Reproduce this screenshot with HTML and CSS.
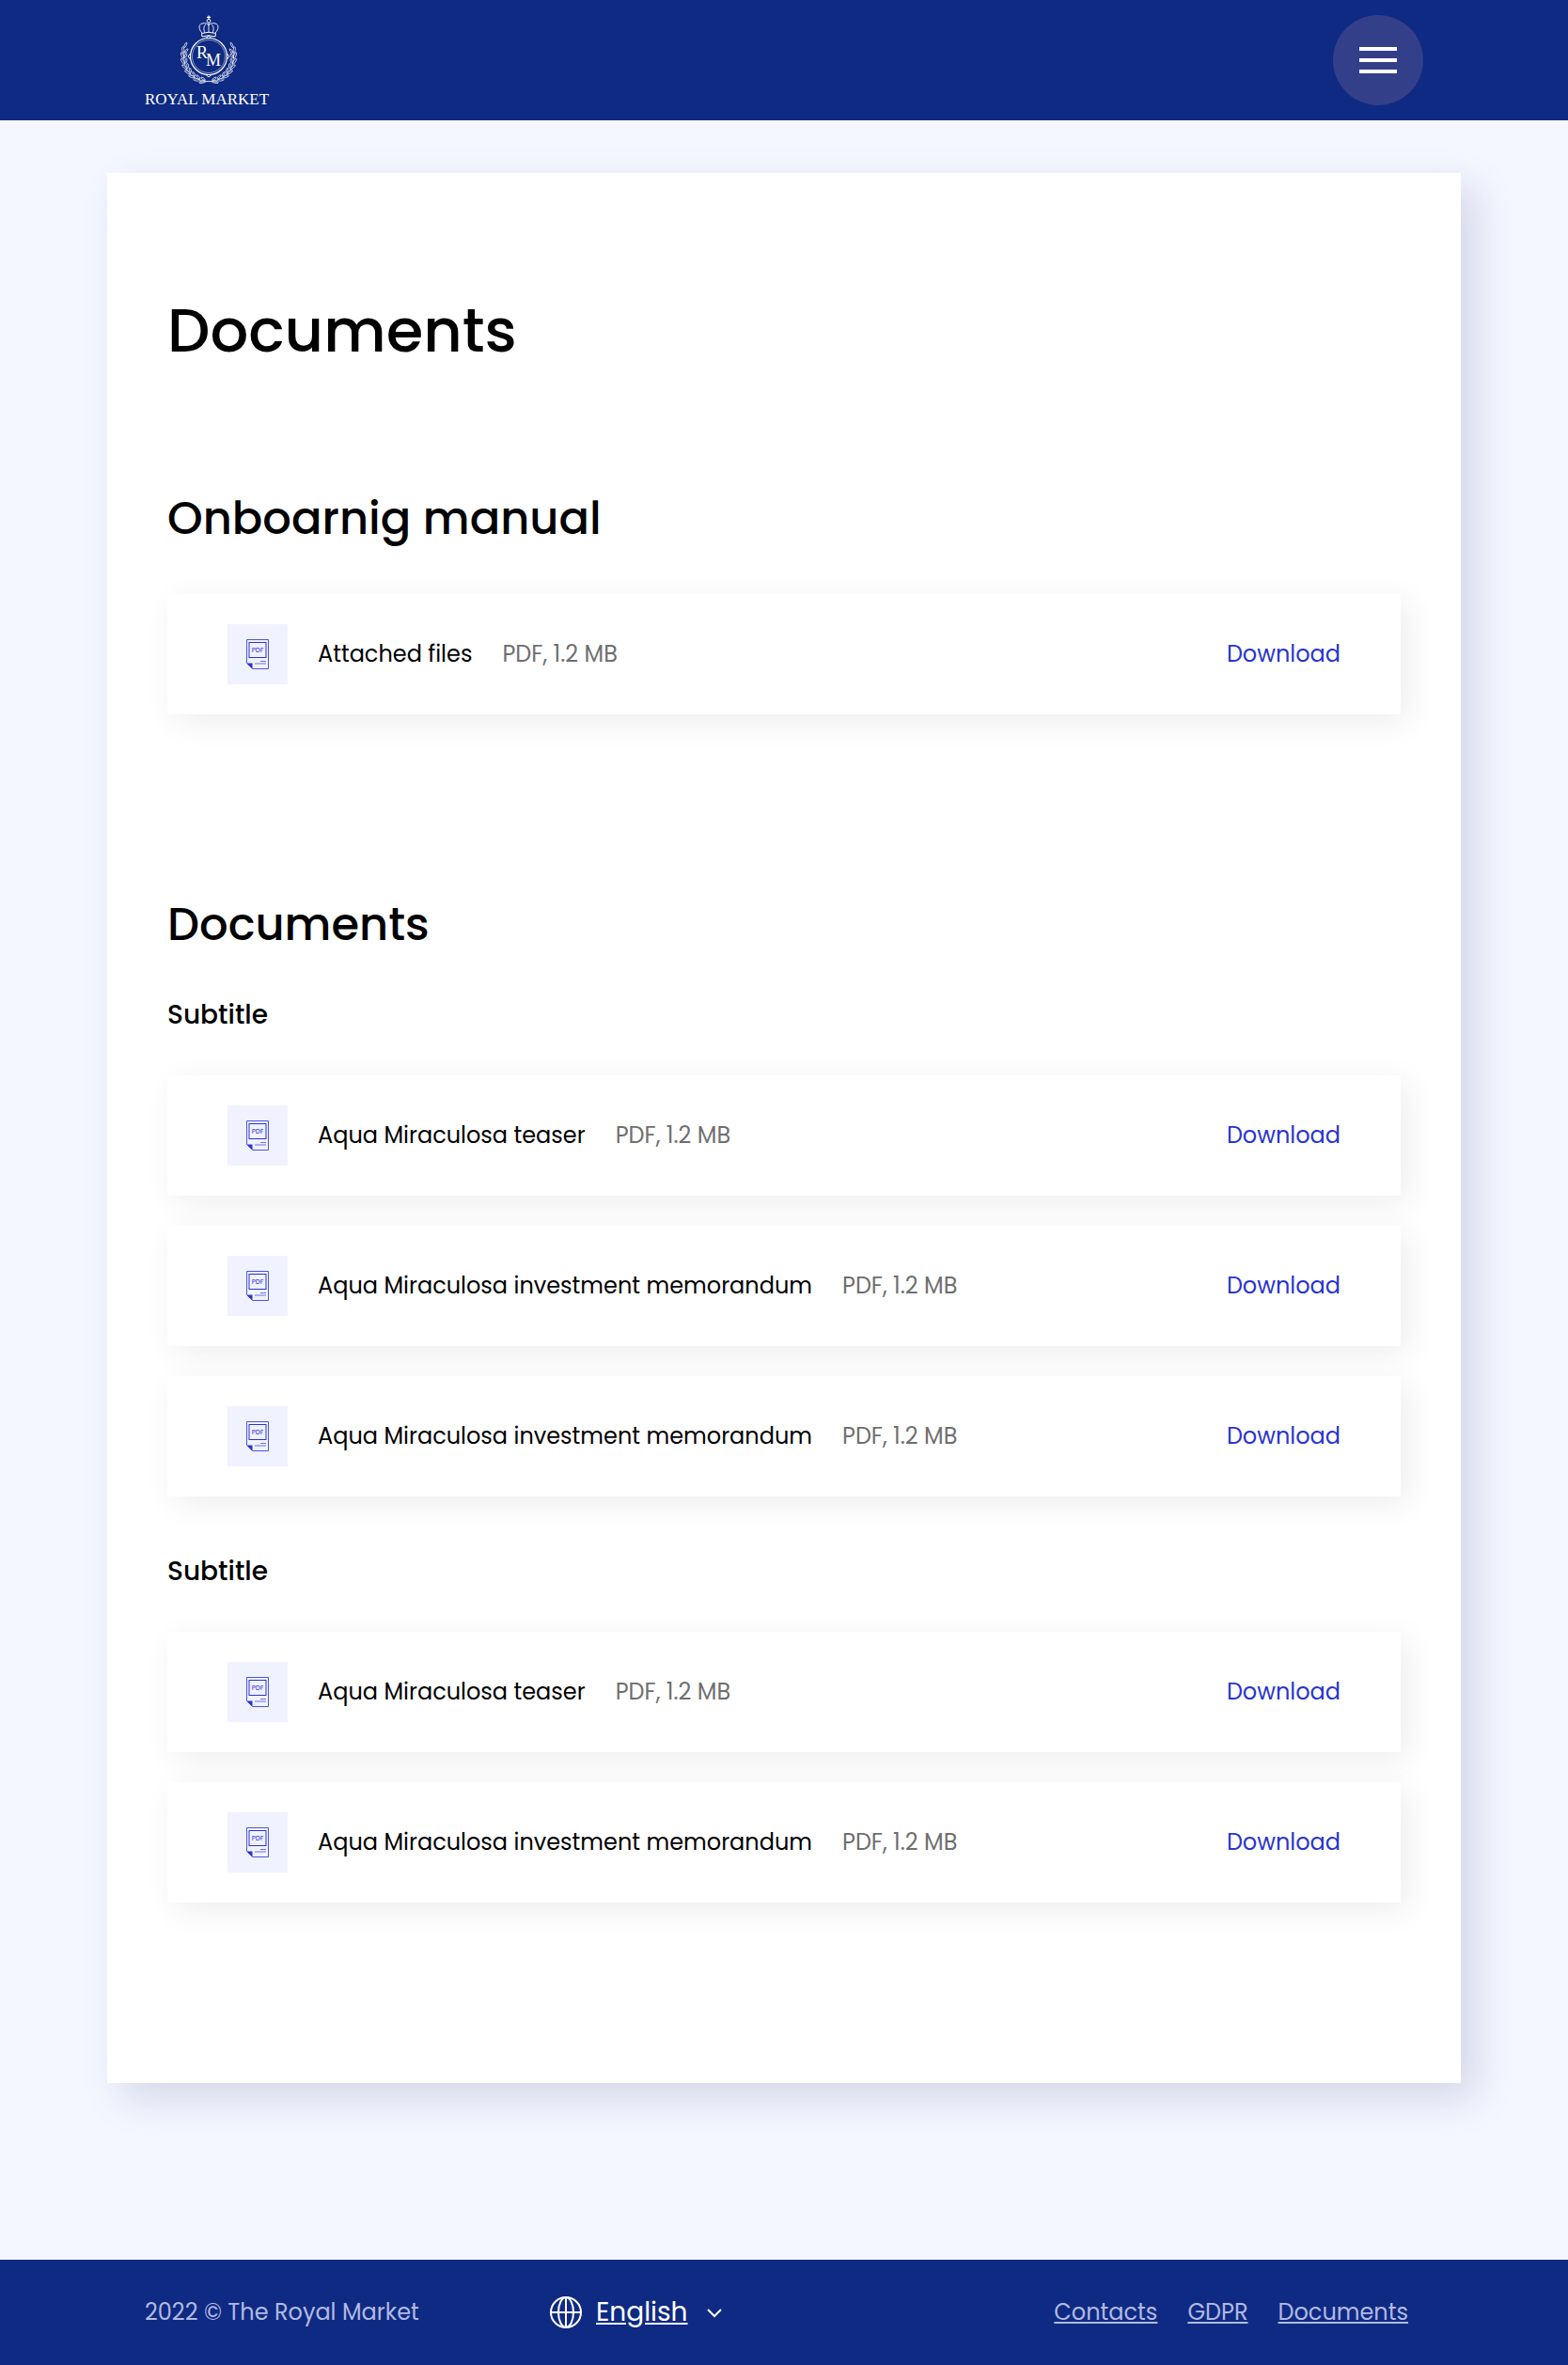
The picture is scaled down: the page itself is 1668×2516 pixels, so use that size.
FILE: index.html
```html
<!DOCTYPE html>
<html lang="en">
<head>
<meta charset="utf-8">
<meta name="viewport" content="width=device-width, initial-scale=1">
<title>Documents – Royal Market</title>
<link rel="stylesheet" href="styles.css">
</head>
<body>
<svg class="sprite" aria-hidden="true">
  <symbol id="pdf" viewBox="0 0 24 32">
    <path d="M.5 .5H23.500V31.500H6.500L.5 25.500Z" fill="none" stroke="#4a55e0"/>
    <rect x="3" y="3.500" width="18" height="16" fill="none" stroke="#2a35d0"/>
    <path d="M.5 25.500H6.500V31.500Z" fill="#2a35d0"/>
    <path d="M15 23.500H21M9 26H21" fill="none" stroke="#6a73e4"/>
  </symbol>
</svg>

<header class="header">
  <div class="container header-inner">
    <a href="#" class="logo" aria-label="Royal Market">
      <svg class="logo-mark" viewBox="0 0 138 96" width="138" height="96" fill="none" stroke="#fff">
        <defs>
          <g id="leaf">
            <ellipse cx="68" cy="72" rx="3.500" ry="1.100" transform="rotate(-22 68 72)"/>
            <ellipse cx="68" cy="68.500" rx="2.600" ry=".9" transform="rotate(20 68 68.500)"/>
          </g>
          <g id="branch">
            <path d="M78 72.500Q74 70 66 70.500Q52 69 46 60T42 38" stroke-width=".6"/>
            <use href="#leaf" transform="rotate(14 68 44)"/>
            <use href="#leaf" transform="rotate(27 68 44)"/>
            <use href="#leaf" transform="rotate(40 68 44)"/>
            <use href="#leaf" transform="rotate(53 68 44)"/>
            <use href="#leaf" transform="rotate(66 68 44)"/>
            <use href="#leaf" transform="rotate(79 68 44)"/>
            <use href="#leaf" transform="rotate(92 68 44)"/>
            <use href="#leaf" transform="rotate(104 68 44)"/>
            <ellipse cx="68" cy="71.500" rx="3" ry=".9" transform="rotate(116 68 44)"/>
          </g>
        </defs>
        <use href="#branch" stroke-width=".7"/>
        <use href="#branch" stroke-width=".7" transform="translate(136 0) scale(-1 1)"/>
        <circle cx="68" cy="44" r="19.500" stroke-width="1.200"/>
        <circle cx="68" cy="44" r="17.500" stroke-width=".5"/>
        <path d="M65 24.500L68 22L71 24.500M65 63.500L68 66L71 63.500M48.500 41L46 44L48.500 47M87.500 41L90 44L87.500 47"/>
        <path d="M68 .5V4M66 2.300H70" stroke-width="1.200"/>
        <circle cx="68" cy="6.300" r="1.900"/>
        <path d="M61 19C57 15 57 10 61 9C64 8 67 9 68 11C69 9 72 8 75 9C79 10 79 15 75 19M68 8V18M64 19C62 15 63 11 65 10M72 19C74 15 73 11 71 10" stroke-width=".9"/>
        <path d="M60.500 19.500Q68 17 75.500 19.500L75 23Q68 20.500 61 23Z"/>
        <g class="logo-text">
          <text x="55" y="46" font-size="18">R</text>
          <text x="65" y="54" font-size="18">M</text>
          <text x="0" y="95" font-size="17">ROYAL MARKET</text>
        </g>
      </svg>
    </a>
    <button type="button" class="menu" aria-label="Menu">
      <span class="menu-bar"></span><span class="menu-bar"></span><span class="menu-bar"></span>
    </button>
  </div>
</header>

<main class="main">
  <article class="sheet">
    <h1 class="title">Documents</h1>

    <section class="section">
      <h2 class="section-title">Onboarnig manual</h2>
      <ul class="files">
        <li class="file">
          <span class="file-icon"><svg width="24" height="32" aria-hidden="true"><use href="#pdf"/><text class="pdf-label" x="12" y="14">PDF</text></svg></span>
          <span class="file-name">Attached files</span>
          <span class="file-meta">PDF, 1.2 MB</span>
          <a class="file-link" href="#">Download</a>
        </li>
      </ul>
    </section>

    <section class="section">
      <h2 class="section-title">Documents</h2>
      <h3 class="subtitle">Subtitle</h3>
      <ul class="files">
        <li class="file">
          <span class="file-icon"><svg width="24" height="32" aria-hidden="true"><use href="#pdf"/><text class="pdf-label" x="12" y="14">PDF</text></svg></span>
          <span class="file-name">Aqua Miraculosa teaser</span>
          <span class="file-meta">PDF, 1.2 MB</span>
          <a class="file-link" href="#">Download</a>
        </li>
        <li class="file">
          <span class="file-icon"><svg width="24" height="32" aria-hidden="true"><use href="#pdf"/><text class="pdf-label" x="12" y="14">PDF</text></svg></span>
          <span class="file-name">Aqua Miraculosa investment memorandum</span>
          <span class="file-meta">PDF, 1.2 MB</span>
          <a class="file-link" href="#">Download</a>
        </li>
        <li class="file">
          <span class="file-icon"><svg width="24" height="32" aria-hidden="true"><use href="#pdf"/><text class="pdf-label" x="12" y="14">PDF</text></svg></span>
          <span class="file-name">Aqua Miraculosa investment memorandum</span>
          <span class="file-meta">PDF, 1.2 MB</span>
          <a class="file-link" href="#">Download</a>
        </li>
      </ul>
      <h3 class="subtitle">Subtitle</h3>
      <ul class="files">
        <li class="file">
          <span class="file-icon"><svg width="24" height="32" aria-hidden="true"><use href="#pdf"/><text class="pdf-label" x="12" y="14">PDF</text></svg></span>
          <span class="file-name">Aqua Miraculosa teaser</span>
          <span class="file-meta">PDF, 1.2 MB</span>
          <a class="file-link" href="#">Download</a>
        </li>
        <li class="file">
          <span class="file-icon"><svg width="24" height="32" aria-hidden="true"><use href="#pdf"/><text class="pdf-label" x="12" y="14">PDF</text></svg></span>
          <span class="file-name">Aqua Miraculosa investment memorandum</span>
          <span class="file-meta">PDF, 1.2 MB</span>
          <a class="file-link" href="#">Download</a>
        </li>
      </ul>
    </section>
  </article>
</main>

<footer class="footer">
  <div class="container footer-inner">
    <span class="copyright">2022 © The Royal Market</span>
    <div class="language">
      <svg width="36" height="36" viewBox="0 0 36 36" fill="none" stroke="#fff" stroke-width="2" aria-hidden="true">
        <circle cx="18" cy="18" r="16"/>
        <ellipse cx="18" cy="18" rx="8" ry="16"/>
        <path d="M18 2V34M2 18H34"/>
      </svg>
      <div class="language-field">
        <select class="language-select" aria-label="Language"><option>English</option></select>
        <svg class="chevron" width="16" height="10" viewBox="0 0 16 10" fill="none" stroke="#fff" stroke-width="2" aria-hidden="true"><path d="M1 1L8 8L15 1"/></svg>
      </div>
    </div>
    <nav class="footer-links">
      <a href="#">Contacts</a>
      <a href="#">GDPR</a>
      <a href="#">Documents</a>
    </nav>
  </div>
</footer>
</body>
</html>
```

FILE: styles.css
```css
* { box-sizing: border-box; }

body {
  margin: 0;
  min-height: 100vh;
  display: flex;
  flex-direction: column;
  background: #f4f7ff;
  color: #000;
  font-family: Poppins, Inter, "Open Sans", sans-serif;
  font-size: 24px;
  line-height: 36px;
}

h1, h2, h3, ul { margin: 0; padding: 0; font-weight: 500; }

.sprite { position: absolute; width: 0; height: 0; }
.pdf-label { font-size: 7px; font-weight: 500; fill: #4a55e0; text-anchor: middle; }

.container {
  width: 100%;
  max-width: 1424px;
  margin: 0 auto;
  padding: 0 32px;
}

.header { background: #0f2a82; }
.header-inner {
  display: flex;
  align-items: center;
  justify-content: space-between;
  padding-top: 16px;
  padding-bottom: 16px;
}
.logo, .logo-mark { display: block; overflow: visible; }
.logo-text {
  fill: #fff;
  stroke: none;
  font-family: "Liberation Serif", serif;
}
.menu {
  display: flex;
  flex-direction: column;
  align-items: center;
  justify-content: center;
  gap: 8px;
  width: 96px;
  height: 96px;
  padding: 0;
  border: 0;
  border-radius: 50%;
  background: #343f8a;
}
.menu-bar { width: 40px; height: 4px; background: #fff; }

.main {
  flex: 1;
  width: 100%;
  max-width: 1504px;
  margin: 0 auto;
  padding: 56px 32px 188px;
}
.sheet {
  padding: 128px 64px 192px;
  background: #fff;
  box-shadow: 16px 16px 40px rgba(36, 36, 100, .15);
}
.title { font-size: 64px; line-height: 80px; margin-bottom: 128px; }
.section + .section { margin-top: 192px; }
.section-title { font-size: 48px; line-height: 64px; }
.section-title + .files { margin-top: 48px; }
.subtitle { margin: 44px 0; font-size: 28px; line-height: 40px; }
.files + .subtitle { margin-top: 60px; }

.files {
  display: flex;
  flex-direction: column;
  gap: 32px;
  list-style: none;
}
.file {
  display: flex;
  align-items: center;
  gap: 32px;
  padding: 32px 64px;
  background: #fff;
  box-shadow: 8px 8px 32px rgba(0, 0, 0, .07);
  font-weight: 400;
}
.file-icon {
  display: flex;
  align-items: center;
  justify-content: center;
  width: 64px;
  height: 64px;
  background: #f0f2ff;
}
.file-meta { color: #6f6f6f; }
.file-link { margin-left: auto; color: #2a35d0; text-decoration: none; }

.footer { background: #0f2a82; color: #b2bae2; }
.footer-inner {
  display: grid;
  grid-template-columns: 430px 1fr auto;
  align-items: center;
  min-height: 112px;
  padding-right: 48px;
}
.language { display: flex; align-items: center; gap: 14px; }
.language-field { position: relative; }
.language-select {
  appearance: none;
  padding: 0 36px 0 0;
  border: 0;
  background: none;
  color: #fff;
  font: inherit;
  font-size: 28px;
  line-height: 40px;
  text-decoration: underline;
}
.chevron { position: absolute; right: 0; top: 16px; pointer-events: none; }
.footer-links { display: flex; gap: 32px; }
.footer-links a { color: inherit; }
```
